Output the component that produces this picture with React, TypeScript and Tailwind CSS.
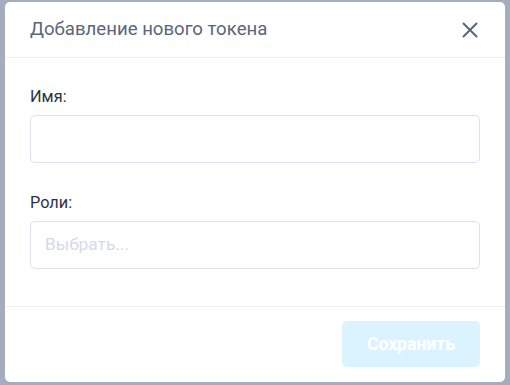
import React from "react";

export default function App() {
  return (
    <div className="w-[510px] h-[385px] bg-[#a4acbe] pt-[2px] pl-[5px]" style={{ fontFamily: "Roboto, 'Noto Sans', sans-serif" }}>
      <div className="w-[500px] h-[380px] bg-white rounded-[5px] flex flex-col">
        <div className="h-[56px] flex items-center justify-between pl-[25px] pr-[27px] border-b border-[#eceef2]">
          <span className="text-[18.6px] text-[#5b6579]">Добавление нового токена</span>
          <svg width="16" height="16" viewBox="0 0 16 16" className="text-[#5b6579]">
            <path d="M1.5 1.5L14.5 14.5M14.5 1.5L1.5 14.5" stroke="currentColor" strokeWidth="2" strokeLinecap="round" />
          </svg>
        </div>
        <div className="flex-1 px-[25px] pt-[29px] flex flex-col">
          <label className="text-[16.3px] text-[#2d3340] leading-[20px]">Имя:</label>
          <div className="mt-[8px] h-[48px] border border-[#dfe1ef] rounded-[5px]" />
          <label className="mt-[30px] text-[16.3px] text-[#2d3340] leading-[20px]">Роли:</label>
          <div className="mt-[8px] h-[48px] border border-[#dfe1ef] rounded-[5px] flex items-center pl-[14px]">
            <span className="text-[17.3px] text-[#d6d9ec]">Выбрать...</span>
          </div>
        </div>
        <div className="h-[76px] border-t border-[#eceef2] flex items-start justify-end pr-[25px] pt-[14px]">
          <div className="w-[138px] h-[46px] rounded-[5px] bg-[#dbf3fe] flex items-center justify-center">
            <span className="text-[17.6px] font-bold text-white">Сохранить</span>
          </div>
        </div>
      </div>
    </div>
  );
}
